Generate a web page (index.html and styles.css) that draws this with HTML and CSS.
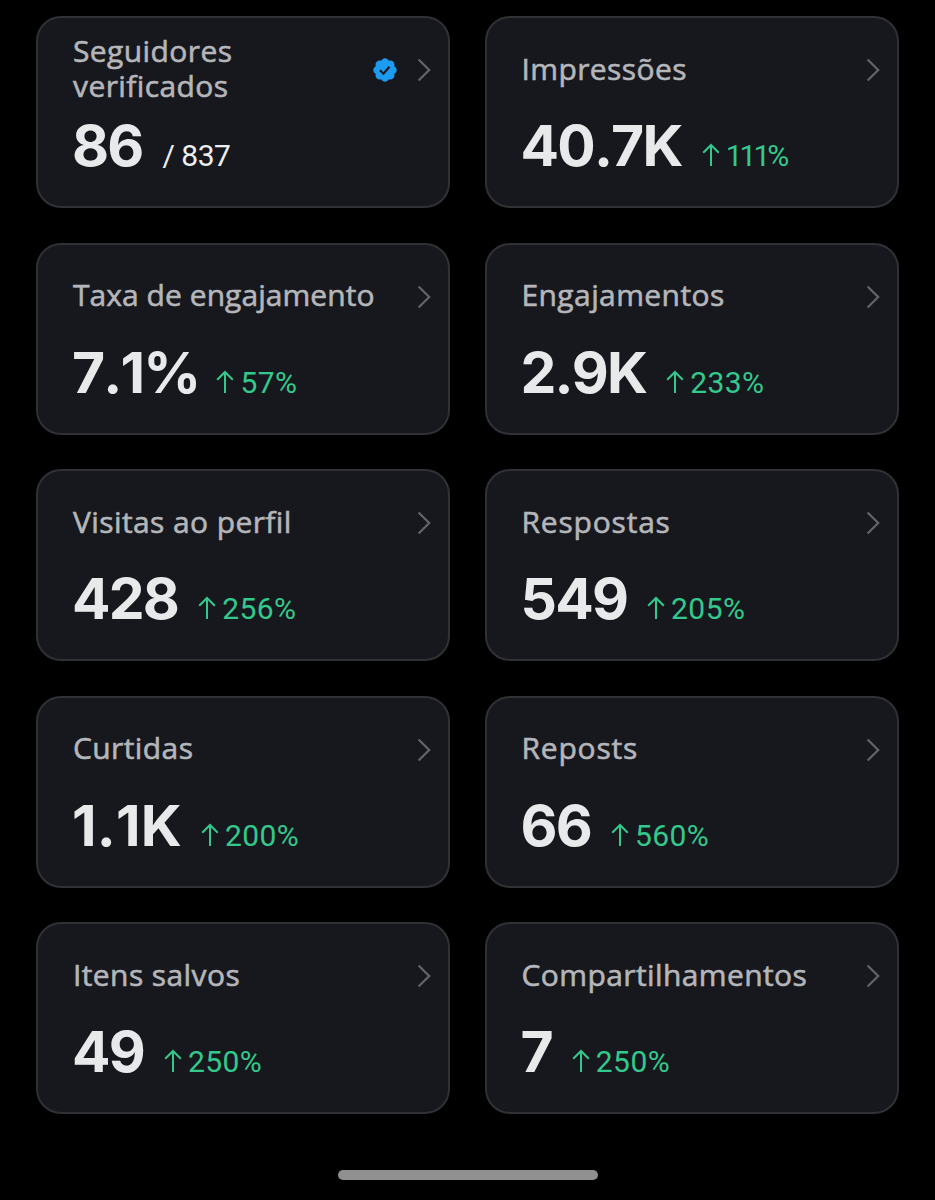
FILE: index.html
```html
<!DOCTYPE html>
<html lang="pt-BR">
<head>
<meta charset="utf-8">
<title>Estatísticas</title>
<link rel="stylesheet" href="styles.css">
</head>
<body>
<svg class="defs" aria-hidden="true">
  <symbol id="chevron" viewBox="0 0 14 24"><path d="M1.6 1.5 12.2 12 1.6 22.5" fill="none" stroke="currentColor" stroke-width="2.2"/></symbol>
  <symbol id="up" viewBox="0 0 18 24"><path d="M9 24V3M1.2 10.8 9 3l7.8 7.8" fill="none" stroke="currentColor" stroke-width="2"/></symbol>
  <symbol id="verified" viewBox="1.5 1.5 21 21"><path fill="#1d9bf0" d="M22.25 12c0-1.43-.88-2.67-2.19-3.34.46-1.39.2-2.9-.81-3.91s-2.52-1.27-3.91-.81c-.66-1.31-1.91-2.19-3.34-2.19s-2.67.88-3.33 2.19c-1.4-.46-2.91-.2-3.92.81s-1.26 2.52-.8 3.91c-1.31.67-2.2 1.91-2.2 3.34s.89 2.67 2.2 3.34c-.46 1.39-.21 2.9.8 3.91s2.52 1.26 3.91.81c.67 1.31 1.91 2.19 3.34 2.19s2.68-.88 3.34-2.19c1.39.45 2.9.2 3.91-.81s1.27-2.52.81-3.91c1.31-.67 2.19-1.91 2.19-3.34z"/><path d="m7.6 12.2 3 3 5.3-6" fill="none" stroke="#16181c" stroke-width="1.8"/></symbol>
</svg>
<main class="grid">
  <article class="card">
    <header class="head"><h2 class="label label-wrap">Seguidores verificados</h2><svg class="badge"><use href="#verified"/></svg><svg class="chevron"><use href="#chevron"/></svg></header>
    <div class="stats"><span class="value">86</span><span class="total">/ 837</span></div>
  </article>
  <article class="card">
    <header class="head"><h2 class="label">Impressões</h2><svg class="chevron"><use href="#chevron"/></svg></header>
    <div class="stats"><span class="value">40.7K</span><span class="delta delta-ones"><svg class="up"><use href="#up"/></svg>111%</span></div>
  </article>
  <article class="card">
    <header class="head"><h2 class="label label-long">Taxa de engajamento</h2><svg class="chevron"><use href="#chevron"/></svg></header>
    <div class="stats"><span class="value value-percent">7.1%</span><span class="delta"><svg class="up"><use href="#up"/></svg>57%</span></div>
  </article>
  <article class="card">
    <header class="head"><h2 class="label">Engajamentos</h2><svg class="chevron"><use href="#chevron"/></svg></header>
    <div class="stats"><span class="value">2.9K</span><span class="delta"><svg class="up"><use href="#up"/></svg>233%</span></div>
  </article>
  <article class="card">
    <header class="head"><h2 class="label">Visitas ao perfil</h2><svg class="chevron"><use href="#chevron"/></svg></header>
    <div class="stats"><span class="value">428</span><span class="delta"><svg class="up"><use href="#up"/></svg>256%</span></div>
  </article>
  <article class="card">
    <header class="head"><h2 class="label label-wide">Respostas</h2><svg class="chevron"><use href="#chevron"/></svg></header>
    <div class="stats"><span class="value">549</span><span class="delta"><svg class="up"><use href="#up"/></svg>205%</span></div>
  </article>
  <article class="card">
    <header class="head"><h2 class="label">Curtidas</h2><svg class="chevron"><use href="#chevron"/></svg></header>
    <div class="stats"><span class="value value-loose">1.1K</span><span class="delta"><svg class="up"><use href="#up"/></svg>200%</span></div>
  </article>
  <article class="card">
    <header class="head"><h2 class="label label-wide">Reposts</h2><svg class="chevron"><use href="#chevron"/></svg></header>
    <div class="stats"><span class="value">66</span><span class="delta"><svg class="up"><use href="#up"/></svg>560%</span></div>
  </article>
  <article class="card">
    <header class="head"><h2 class="label">Itens salvos</h2><svg class="chevron"><use href="#chevron"/></svg></header>
    <div class="stats"><span class="value">49</span><span class="delta"><svg class="up"><use href="#up"/></svg>250%</span></div>
  </article>
  <article class="card">
    <header class="head"><h2 class="label">Compartilhamentos</h2><svg class="chevron"><use href="#chevron"/></svg></header>
    <div class="stats"><span class="value">7</span><span class="delta"><svg class="up"><use href="#up"/></svg>250%</span></div>
  </article>
</main>
<div class="home-bar"></div>
</body>
</html>
```
FILE: styles.css
```css
* { box-sizing: border-box; }
body {
  margin: 0;
  height: 1200px;
  overflow: hidden;
  padding: 16px 36px 0;
  background: #000;
  font-family: Inter, "Liberation Sans", sans-serif;
}
.defs { display: none; }
.grid {
  display: grid;
  grid-template-columns: 414px 414px;
  grid-auto-rows: 192px;
  gap: 34.5px 34.5px;
}
.card {
  border: 2px solid #2f3136;
  border-radius: 25px;
  background: #17181d;
  padding: 15px 17px 0 35px;
}
.head {
  display: flex;
  align-items: center;
  height: 74px;
}
.label {
  flex: 1;
  margin: 0;
  padding-bottom: 4px;
  font: 500 30px/35px "Open Sans", sans-serif;
  letter-spacing: 0.4px;
  -webkit-text-stroke: 0.6px #b4b6ba;
  color: #b4b6ba;
  white-space: nowrap;
}
.label-wrap { white-space: normal; }
.label-long { letter-spacing: 0.05px; }
.label-wide { letter-spacing: 0.8px; }
.badge { width: 24px; height: 24px; margin-right: 20px; }
.chevron { width: 14px; height: 24px; color: #626468; }
.stats {
  display: flex;
  align-items: baseline;
  gap: 20px;
  line-height: 70px;
  margin-top: 4px;
}
.value {
  margin-left: -1px;
  font-size: 57px;
  font-weight: 700;
  font-kerning: none;
  letter-spacing: -1.8px;
  color: #e7e9ea;
}
.value-loose { letter-spacing: 0.2px; margin-right: -1px; }
.value-percent { margin-right: -3px; }
.total, .delta {
  font-family: Roboto, sans-serif;
  font-size: 30px;
  font-weight: 400;
}
.total { color: #eceeef; letter-spacing: -0.5px; }
.delta {
  display: flex;
  align-items: baseline;
  gap: 6px;
  letter-spacing: 0.4px;
  color: #34c98c;
}
.delta-ones { letter-spacing: -3px; }
.up { width: 18px; height: 24px; margin-bottom: -2px; }
.home-bar {
  width: 260px;
  height: 10px;
  margin: 56px auto 0;
  border-radius: 5px;
  background: #909090;
}
```
